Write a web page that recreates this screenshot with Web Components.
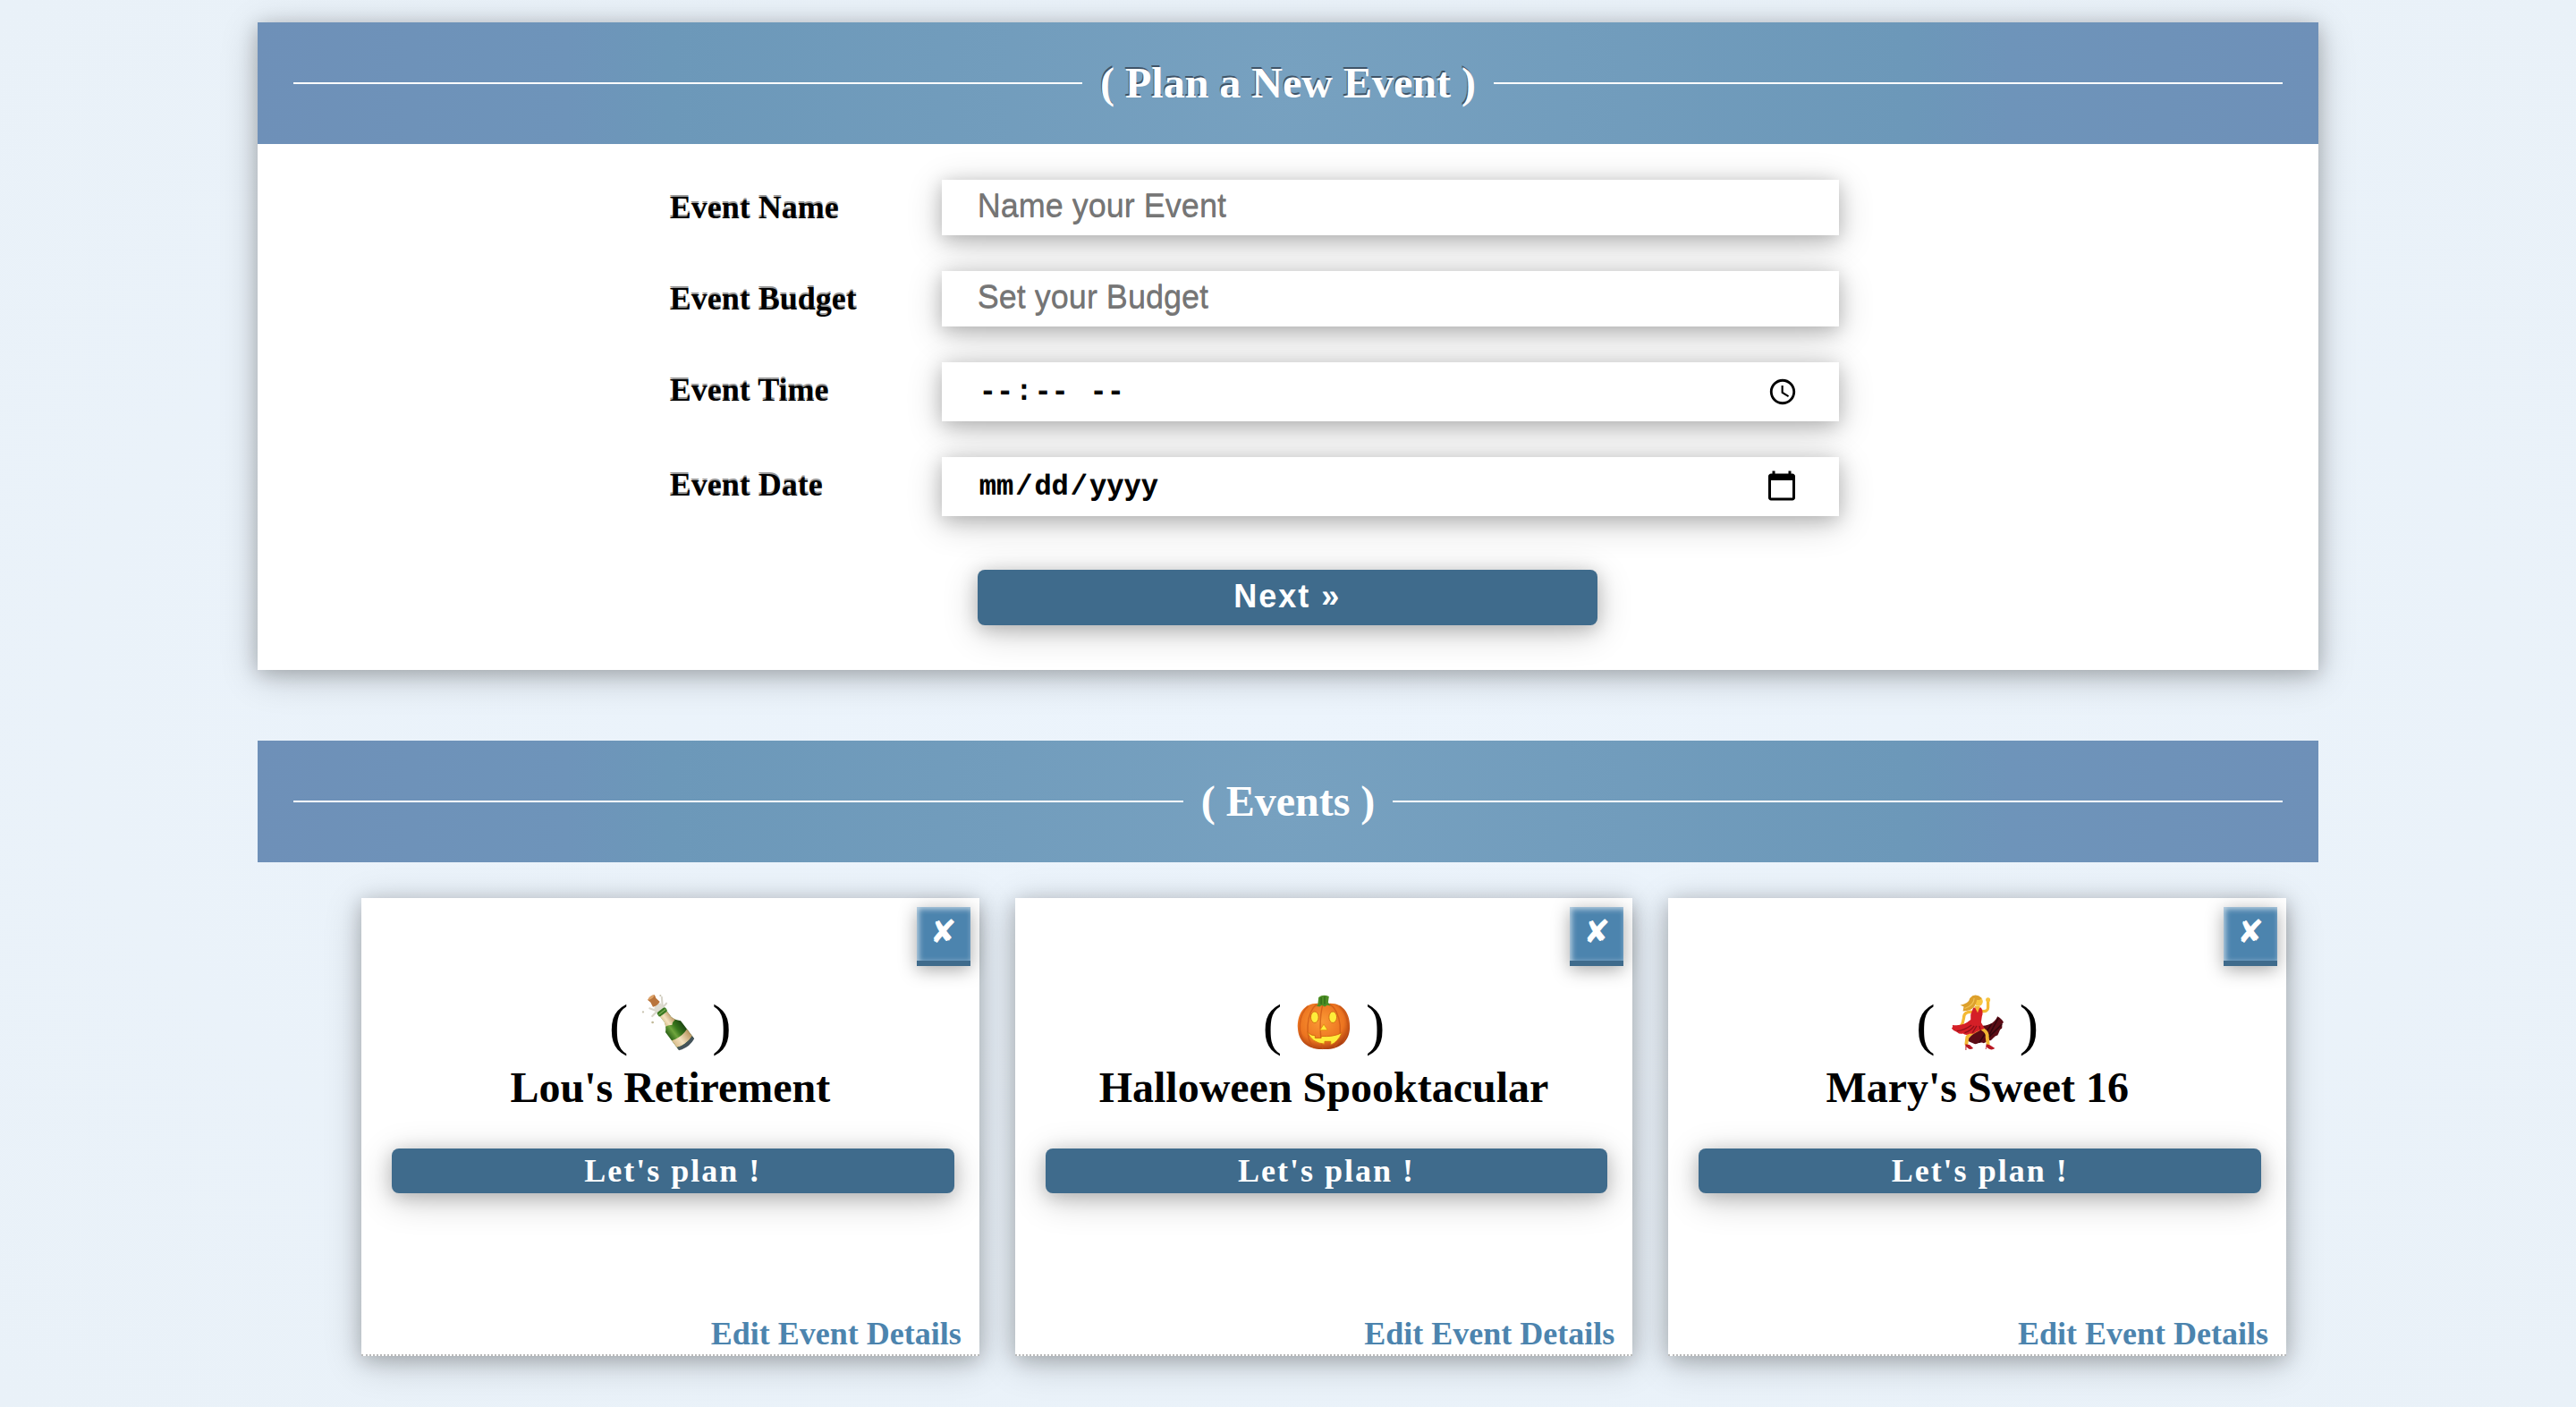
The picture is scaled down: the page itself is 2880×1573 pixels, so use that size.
<!DOCTYPE html>
<html lang="en">
<head>
<meta charset="utf-8">
<title>Event Planner</title>
<style>
html{min-height:100%}
body{margin:0;padding:25px 10% 50px;color:#000;font-family:"Liberation Serif","Times New Roman",serif;background:radial-gradient(ellipse at center,#ecf4fc 0%,#e9f1f8 100%);--lift:0 4px 20px rgba(0,0,0,.2),0 8px 40px rgba(0,0,0,.2)}
</style>
</head>
<body>
<planner-app></planner-app>
<script>
const art = {
  bottle: `<svg viewBox="0 0 64 64" aria-hidden="true">
    <defs><linearGradient id="glass" x1="0" x2="1"><stop offset="0" stop-color="#2c6317"/><stop offset=".35" stop-color="#6fa53e"/><stop offset=".6" stop-color="#37761c"/><stop offset="1" stop-color="#1d4712"/></linearGradient>
    <linearGradient id="foil" x1="0" x2="1"><stop offset="0" stop-color="#d9bd8c"/><stop offset=".4" stop-color="#f4e2bf"/><stop offset="1" stop-color="#b8945f"/></linearGradient></defs>
    <g transform="rotate(-37 32 32)">
      <path d="M27 8q5-3 10 0l-1 7h-8z" fill="#dedbd0"/><path d="M27 11l-4-6M37 11l5-8M27 13l-7 1M37 13l5-1" stroke="#d8d5ca" stroke-width="2.200" stroke-linecap="round"/>
      <path d="M27-4q5-3 10 0l-1 4 1 6q-5 2-10 0l1-6z" fill="#b9743b"/><path d="M27-4q5-3 10 0-5 3-10 0z" fill="#dda268"/>
      <rect x="26" y="14" width="12" height="6" rx="2" fill="#3b7a22"/><path d="M27 17h10" stroke="#8bb85f"/>
      <path d="M27 20h10v8q1 5 6 10v25q-11 5-22 0V38q5-5 6-10z" fill="url(#glass)"/>
      <path d="M27 20h10v8q1 3 2 5-4 0-7 3-3-3-7-3 1-2 2-5z" fill="url(#foil)"/>
      <path d="M21 50q11 4 22 0v10q-11 4-22 0z" fill="url(#foil)"/>
      <path d="M21 60q11 4 22 0v4q-11 5-22 0z" fill="#44535a"/>
    </g>
    <circle cx="1" cy="20" r="1.200" fill="#c8c3b0"/><circle cx="12" cy="32" r="1.400" fill="#c0b898"/><circle cx="21" cy="1" r="1.100" fill="#c8c3b0"/>
  </svg>`,
  pumpkin: `<svg viewBox="0 0 64 64" aria-hidden="true">
    <defs><radialGradient id="skin" cx=".45" cy=".4" r=".62"><stop offset="0" stop-color="#fb9a35"/><stop offset=".7" stop-color="#ec7420"/><stop offset="1" stop-color="#a83c10"/></radialGradient></defs>
    <path d="M32 11C12 6 1 20 2 39c1 17 14 25 30 24 16 1 29-7 30-24 1-19-10-33-30-28z" fill="url(#skin)"/>
    <path d="M24 11C12 20 9 50 21 62M31 11c-4 14-4 36 0 52M39 11c13 9 17 39 4 51M14 13C2 24 2 44 10 55M50 13c12 11 12 31 4 43" fill="none" stroke="#c95516" stroke-width="1.500" opacity=".7"/>
    <path d="M25 12l1-9q5-4 12-1l-1 7 3 4-4-1-3 2-3-2-3 2-4-1z" fill="#4d8f25"/><path d="M29 3v8M33 2v9" stroke="#2f6a18" stroke-width="1.300"/>
    <ellipse cx="21.500" cy="26" rx="4.500" ry="6.500" fill="#ffed3a" stroke="#cf6c12"/><ellipse cx="42.500" cy="26" rx="4.500" ry="6.500" fill="#ffed3a" stroke="#cf6c12"/>
    <path d="M32 34l4.500 7h-9z" fill="#ffed3a" stroke="#e58a16"/>
    <path d="M13 43q5 5 9 4v3h7v-2q14 1 24-4-5 11-13 14v-4h-7v3q-15-1-20-14z" fill="#ffed3a" stroke="#d46c12"/>
  </svg>`,
  dancer: `<svg viewBox="0 0 64 64" aria-hidden="true">
    <path d="M35 36c8 0 16-2 20-11 3 2 5 3 7 7-3 2-1 4-2 7-3 1-3 5-5 8-3 0-5 4-8 6-3-1-5 2-8 3-3-2-7 1-10 1-3-2-7-2-9-5z" fill="#5b0c16"/>
    <path d="M56 27l-12 22M60 34L42 52M48 34L34 55" stroke="#31060d" stroke-width="1.500"/>
    <path d="M33 40q-9 4-13 9l-1 8M38 40q6 4 5 9l1 8" fill="none" stroke="#f2b632" stroke-width="4" stroke-linecap="round"/>
    <path d="M18 57l5 1 4 4q-4 2-6 0l-2-2v4h-1zM42 57l4 1 6 4q-4 3-8 0l-2-2v3h-1z" fill="#b81822"/>
    <path d="M26 20q-10-1-10 7-1 6-3 9M37 19q7 1 7-4V7" fill="none" stroke="#f4b934" stroke-width="3.400" stroke-linecap="round"/>
    <circle cx="44" cy="6" r="2.600" fill="#f7c23c"/><circle cx="13" cy="36" r="2" fill="#f7c23c"/>
    <path d="M27 15h9q3 5 1 10l-1 7 4 7q-5 2-10 4-3 3-7 2-4 3-8 0-4 1-7-2-4-1-6-4 2-2 1-4 12 2 21-6V23z" fill="#d51f27"/>
    <path d="M25 35q-8 6-17 7M28 36q-4 6-11 8M31 36l-5 8M34 36l1 4" fill="none" stroke="#8f1119" stroke-width="1.300"/>
    <path d="M28 13h7l-3 8z" fill="#f4b934"/><circle cx="33" cy="8" r="5" fill="#f8c640"/>
    <path d="M37 4q-8-7-14 0-1 6-11 8 3 1 4 2l-1 5q9 0 13-5 3-5 3-8 3 1 6-2z" fill="#dda02c"/><path d="M28 4q0 8-11 12" fill="none" stroke="#f1c355" stroke-width="1.200"/>
  </svg>`
};

const define = (name, html, setup) => customElements.define(name, class extends HTMLElement {
  connectedCallback() {
    if (this.shadowRoot) return;
    const template = document.createElement('template');
    template.innerHTML = html;
    this.attachShadow({mode: 'open'}).append(template.content.cloneNode(true));
    if (setup) setup(this, this.shadowRoot);
  }
});

define('section-banner', `
<style>
:host{display:flex;align-items:center;gap:20px;padding:40px;background:radial-gradient(circle at center,#77a1c0 0%,#6c98b9 60%,#6e94ba 70%,#6e90b8 100%);color:#fff}
:host::before,:host::after{content:"";flex:1;height:2px;background:#fff}
h2{margin:0;font-size:48px;line-height:56px;font-weight:bold;text-shadow:var(--title-shadow,none)}
</style>
<h2>( <slot></slot> )</h2>`);

define('form-field', `
<style>
:host{display:flex;align-items:flex-start}
label{flex:0 0 304px;padding-top:10px;font-size:36px;line-height:42px;font-weight:bold;text-shadow:0 -2px 0 #999}
input{flex:1;min-width:0;box-sizing:border-box;height:62px;margin:0;padding:0 40px 2px;border:0;border-radius:0;background:#fff;color:#000;box-shadow:var(--lift);font-size:36px;font-family:"Liberation Sans",Arial,sans-serif;text-shadow:0 -1px 0 #888}
input::placeholder{color:#757575}
input[type=time],input[type=date]{height:66px;padding-bottom:0;font-family:"Liberation Mono",monospace;font-size:32px;font-weight:bold}
input::-webkit-datetime-edit-hour-field,input::-webkit-datetime-edit-minute-field,input::-webkit-datetime-edit-ampm-field,input::-webkit-datetime-edit-month-field,input::-webkit-datetime-edit-day-field,input::-webkit-datetime-edit-year-field{padding:0 2px}
input::-webkit-datetime-edit-ampm-field{padding-left:12px}
input::-webkit-calendar-picker-indicator{margin-right:3px}
input[type=date]::-webkit-calendar-picker-indicator{width:38px;height:38px}
</style>
<label for="control"></label><input id="control">`, (host, root) => {
  root.querySelector('label').textContent = host.getAttribute('label');
  const input = root.querySelector('input');
  input.type = host.getAttribute('type') || 'text';
  input.placeholder = host.getAttribute('placeholder') || '';
});

define('event-form', `
<style>
:host{display:block;background:#fff;box-shadow:var(--lift);--title-shadow:-1px -2px 0 #3f5468}
form{display:flex;flex-direction:column;gap:40px;padding:40px 536px 50px 20%}
button{align-self:flex-start;width:53%;height:62px;margin:20px 0 0 344px;padding:0 0 2px;border:0;border-radius:8px;background:#3f6b8c;color:#fff;font:bold 36px "Liberation Sans",Arial,sans-serif;letter-spacing:2px;box-shadow:var(--lift)}
</style>
<section-banner>Plan a New Event</section-banner>
<form>
<form-field label="Event Name" placeholder="Name your Event"></form-field>
<form-field label="Event Budget" placeholder="Set your Budget"></form-field>
<form-field label="Event Time" type="time"></form-field>
<form-field label="Event Date" type="date"></form-field>
<button type="button">Next »</button>
</form>`);

define('event-card', `
<style>
:host{display:flex;flex-direction:column;position:relative;box-sizing:border-box;min-height:512px;padding:100px 28px 2px;background:#fff;border-bottom:2px dotted #bbb;box-shadow:var(--lift);text-align:center}
.close{position:absolute;top:10px;right:10px;width:60px;height:66px;padding:0 0 6px;border:0;border-bottom:6px solid #3f6b8c;background:#4c84ae;color:#fff;font:bold 36px "DejaVu Sans",sans-serif;box-shadow:inset 2px 2px 6px #c5d8e6,0 4px 20px rgba(0,0,0,.35)}
.icon{display:flex;justify-content:center;align-items:center;gap:16px;height:84px;font-size:64px;line-height:84px}
svg{display:block;width:62px;height:62px;margin-bottom:6px;overflow:visible}
h3{margin:0;font-size:48px;line-height:56px;font-weight:bold}
.plan{height:50px;margin:40px 0 0 6px;padding:0;border:0;border-radius:8px;background:#3f6b8c;color:#fff;font:bold 36px "Liberation Serif",serif;letter-spacing:2px;box-shadow:var(--lift)}
a{align-self:flex-end;margin:auto -8px 0 0;font-size:36px;line-height:42px;font-weight:bold;color:#4c84ae;text-decoration:none}
</style>
<button class="close" type="button" aria-label="Delete event">✘</button>
<div class="icon"><span>(</span><span class="art"></span><span>)</span></div>
<h3><slot></slot></h3>
<button class="plan" type="button">Let's plan !</button>
<a href="#">Edit Event Details</a>`, (host, root) => {
  root.querySelector('.art').innerHTML = art[host.getAttribute('art')];
});

define('event-list', `
<style>
:host{display:block;margin-top:79px}
.cards{display:grid;grid-template-columns:repeat(3,minmax(0,1fr));gap:40px;padding:40px 36px 0 116px}
</style>
<section-banner>Events</section-banner>
<div class="cards"><slot></slot></div>`);

define('planner-app', `
<style>:host{display:block}</style>
<event-form></event-form>
<event-list>
<event-card art="bottle">Lou's Retirement</event-card>
<event-card art="pumpkin">Halloween Spooktacular</event-card>
<event-card art="dancer">Mary's Sweet 16</event-card>
</event-list>`);
</script>
</body>
</html>
